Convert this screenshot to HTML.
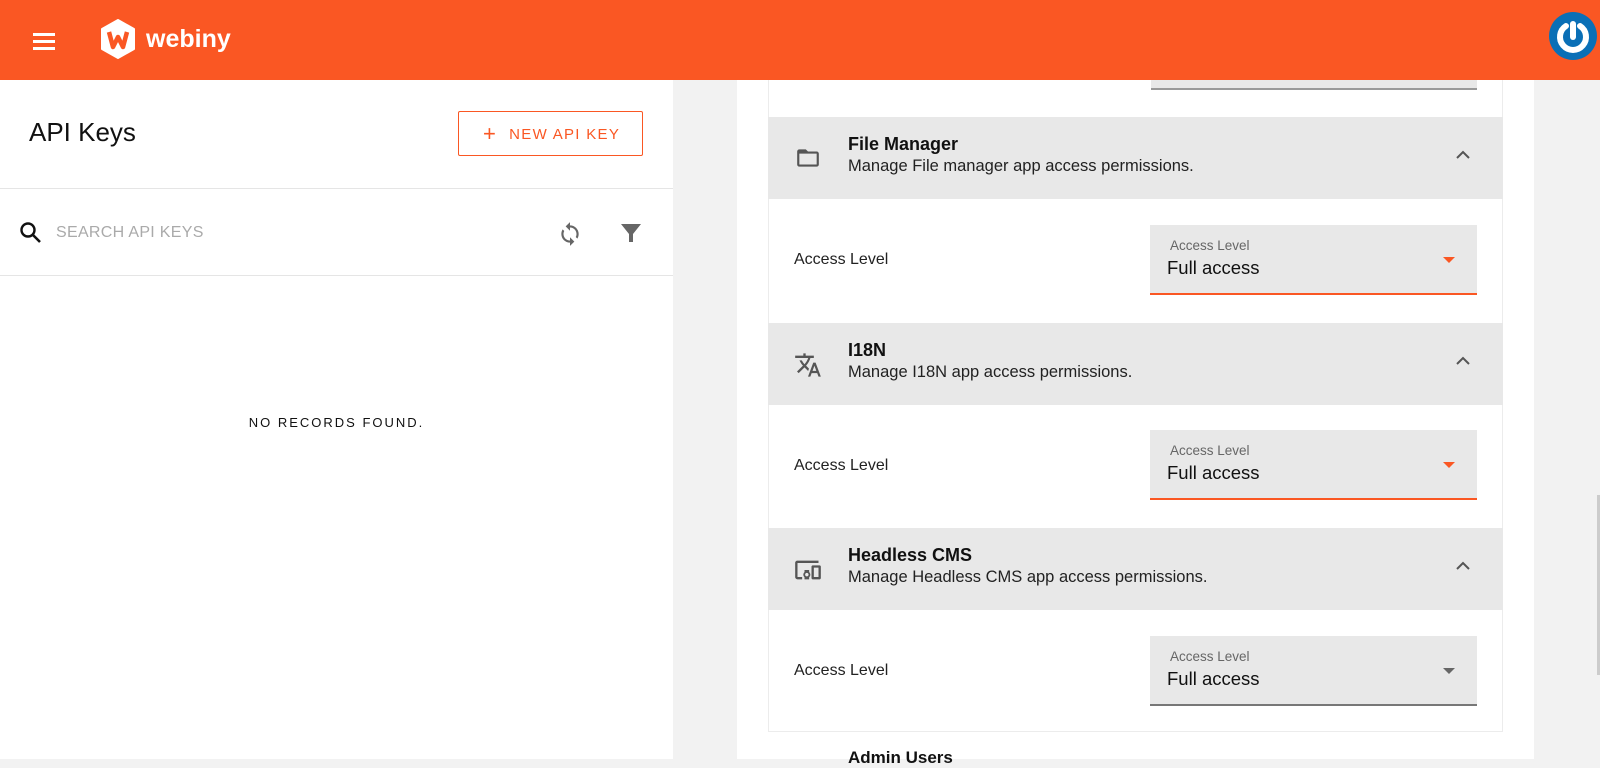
<!DOCTYPE html>
<html><head><meta charset="utf-8"><style>
*{box-sizing:border-box;margin:0;padding:0}
body{width:1600px;height:759px;overflow:hidden;background:#f2f2f2;font-family:"Liberation Sans",sans-serif;position:relative;color:#111}
.abs{position:absolute}
.hdr{left:0;top:0;width:1600px;height:80px;background:#fa5723}
.left{left:0;top:80px;width:673px;height:679px;background:#fff}
.wrap{left:737px;top:80px;width:797px;height:679px;background:#fff}
.card{left:768px;top:80px;width:735px;height:652px;border:1px solid #ececec;border-top:none;background:#fff}
.sh{left:768px;width:735px;height:82px;background:#e8e8e8}
.sh .t{position:absolute;left:80px;top:17px;font-size:18px;font-weight:bold;color:#111}
.sh .d{position:absolute;left:80px;top:40px;font-size:16.5px;color:#222}
.sh .ic{position:absolute;left:26px;top:28px}
.sh .chev{position:absolute;left:686px;top:32px}
.lab{left:794px;font-size:16px;color:#222}
.fld{left:1150px;width:327px;height:70px;background:#e8e8e8;border-bottom:2px solid #fa5723}
.fld .l{position:absolute;left:20px;top:13px;font-size:13.5px;color:#666}
.fld .v{position:absolute;left:17px;top:32px;font-size:18.5px;color:#111}
.fld .a{position:absolute;left:293px;top:32px;width:0;height:0;border-left:6px solid transparent;border-right:6px solid transparent;border-top:6px solid #fa5723}
</style></head><body>
<div class="abs hdr">
 <div class="abs" style="left:33px;top:33px;width:22px;height:3px;background:#fff"></div>
 <div class="abs" style="left:33px;top:40px;width:22px;height:3px;background:#fff"></div>
 <div class="abs" style="left:33px;top:47px;width:22px;height:3px;background:#fff"></div>
 <svg class="abs" style="left:100px;top:19px" width="36" height="40" viewBox="0 0 36 40"><path d="M18 1 L34 10 L34 30 L18 39 L2 30 L2 10 Z" fill="#fff" stroke="#fff" stroke-width="2" stroke-linejoin="round"/><path d="M9 13 L13 28 L18 18 L23 28 L27 13" fill="none" stroke="#fa5723" stroke-width="4.5" stroke-linejoin="round"/></svg>
 <div class="abs" style="left:146px;top:25px;color:#fff;font-size:25px;font-weight:bold">webiny</div>
 <svg class="abs" style="left:1549px;top:12px" width="48" height="48" viewBox="0 0 48 48"><circle cx="24" cy="24" r="24" fill="#0a6fb6"/><path d="M17 14 A13 13 0 1 0 31 14" fill="none" stroke="#fff" stroke-width="6" stroke-linecap="round"/><path d="M24 12 V25" stroke="#fff" stroke-width="6" stroke-linecap="round"/></svg>
</div>
<div class="abs left">
 <div class="abs" style="left:29px;top:37px;font-size:26px;color:#111">API Keys</div>
 <div class="abs" style="left:458px;top:31px;width:185px;height:45px;border:1px solid #fa5723;border-radius:2px;color:#fa5723;font-size:15px;letter-spacing:1.3px;line-height:43px;padding-left:24px"><span style="font-size:22px;vertical-align:-2px;margin-right:12px">+</span>NEW API KEY</div>
 <div class="abs" style="left:0;top:108px;width:673px;height:1px;background:#e5e5e5"></div>
 <svg class="abs" style="left:19px;top:141px" width="24" height="24" viewBox="0 0 24 24"><circle cx="9" cy="9" r="6.5" fill="none" stroke="#111" stroke-width="2.4"/><path d="M14 14 L21 21" stroke="#111" stroke-width="2.6"/></svg>
 <div class="abs" style="left:56px;top:144px;font-size:16px;color:#aaa;letter-spacing:.3px">SEARCH API KEYS</div>
 <svg class="abs" style="left:557px;top:141px" width="26" height="26" viewBox="0 0 24 24"><path fill="#666" d="M12 4V1L8 5l4 4V6c3.31 0 6 2.690 6 6 0 1.01-.25 1.970-.7 2.8l1.46 1.46C19.54 15.03 20 13.57 20 12c0-4.42-3.58-8-8-8zm0 14c-3.31 0-6-2.69-6-6 0-1.01.25-1.97.7-2.8L5.24 7.74C4.46 8.97 4 10.43 4 12c0 4.42 3.58 8 8 8v3l4-4-4-4v3z"/></svg>
 <svg class="abs" style="left:619px;top:141px" width="24" height="24" viewBox="0 0 24 24"><path fill="#666" d="M2 3h20l-8 10v8h-4v-8z"/></svg>
 <div class="abs" style="left:0;top:195px;width:673px;height:1px;background:#e5e5e5"></div>
 <div class="abs" style="left:0;top:335px;width:673px;text-align:center;font-size:13px;letter-spacing:2px;color:#111">NO RECORDS FOUND.</div>
</div>
<div class="abs wrap"></div>
<div class="abs card"></div>
<div class="abs" style="left:1151px;top:80px;width:326px;height:10px;background:#e8e8e8;border-bottom:2px solid #999"></div>

<div class="abs sh" style="top:117px"><svg class="ic" width="28" height="26" viewBox="0 0 24 24"><path fill="#555" d="M20 6h-8l-2-2H4c-1.1 0-2 .9-2 2v12c0 1.1.9 2 2 2h16c1.1 0 2-.9 2-2V8c0-1.1-.9-2-2-2zm0 12H4V8h16v10z"/></svg><div class="t">File Manager</div><div class="d">Manage File manager app access permissions.</div><svg class="chev" width="18" height="12" viewBox="0 0 18 12"><path d="M3 9 L9 3 L15 9" fill="none" stroke="#555" stroke-width="2"/></svg></div>
<div class="abs lab" style="top:251px">Access Level</div>
<div class="abs fld" style="top:225px"><div class="l">Access Level</div><div class="v">Full access</div><div class="a"></div></div>

<div class="abs sh" style="top:323px"><svg class="ic" width="28" height="28" viewBox="0 0 24 24"><path fill="#555" d="M12.87 15.07l-2.54-2.51.03-.03A17.52 17.52 0 0014.07 6H17V4h-7V2H8v2H1v2h11.17C11.5 7.92 10.44 9.75 9 11.35 8.07 10.32 7.3 9.19 6.69 8h-2c.73 1.630 1.73 3.17 2.98 4.56l-5.09 5.02L4 19l5-5 3.11 3.11.76-2.04zM18.5 10h-2L12 22h2l1.12-3h4.75L21 22h2l-4.5-12zm-2.62 7l1.62-4.33L19.12 17h-3.24z"/></svg><div class="t">I18N</div><div class="d">Manage I18N app access permissions.</div><svg class="chev" width="18" height="12" viewBox="0 0 18 12"><path d="M3 9 L9 3 L15 9" fill="none" stroke="#555" stroke-width="2"/></svg></div>
<div class="abs lab" style="top:457px">Access Level</div>
<div class="abs fld" style="top:430px"><div class="l">Access Level</div><div class="v">Full access</div><div class="a"></div></div>

<div class="abs sh" style="top:528px"><svg class="ic" width="28" height="28" viewBox="0 0 24 24"><path fill="#555" d="M3 6h18V4H3c-1.1 0-2 .9-2 2v12c0 1.1.9 2 2 2h4v-2H3V6zm10 6H9v1.78c-.61.55-1 1.33-1 2.22s.39 1.67 1 2.22V20h4v-1.78c.61-.55 1-1.34 1-2.22s-.39-1.67-1-2.22V12zm-2 5.5c-.83 0-1.5-.67-1.5-1.5s.67-1.5 1.5-1.5 1.5.67 1.5 1.5-.67 1.5-1.5 1.5zM22 8h-6c-.5 0-1 .5-1 1v10c0 .5.5 1 1 1h6c.5 0 1-.5 1-1V9c0-.5-.5-1-1-1zm-1 10h-4v-8h4v8z"/></svg><div class="t">Headless CMS</div><div class="d">Manage Headless CMS app access permissions.</div><svg class="chev" width="18" height="12" viewBox="0 0 18 12"><path d="M3 9 L9 3 L15 9" fill="none" stroke="#555" stroke-width="2"/></svg></div>
<div class="abs lab" style="top:662px">Access Level</div>
<div class="abs fld" style="top:636px;border-bottom-color:#777"><div class="l">Access Level</div><div class="v">Full access</div><div class="a" style="border-top-color:#666"></div></div>

<div class="abs" style="left:848px;top:748px;font-size:17px;font-weight:bold">Admin Users</div>
<div class="abs" style="left:1597px;top:495px;width:3px;height:180px;background:#ccc"></div>
</body></html>
